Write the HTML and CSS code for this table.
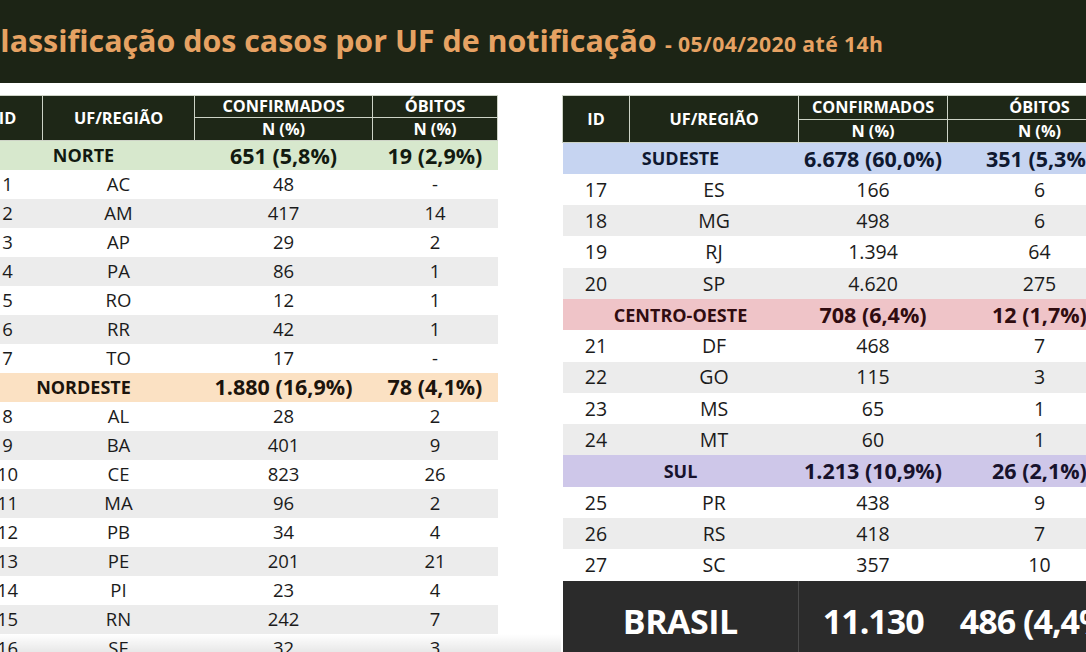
FILE: index.html
```html
<!DOCTYPE html>
<html lang="pt-BR">
<head>
<meta charset="utf-8">
<title>Classificação dos casos por UF de notificação</title>
<link rel="stylesheet" href="styles.css">
</head>
<body>
<header class="titlebar">
  <h1 class="title"><span class="title-main">Classificação dos casos por UF de notificação</span> <span class="title-date">- 05/04/2020 até 14h</span></h1>
</header>
<main class="tables">
  <table class="grid grid-left">
    <colgroup><col class="c-id"><col class="c-uf"><col class="c-conf"><col class="c-ob"></colgroup>
    <thead>
      <tr class="h1"><th rowspan="2">ID</th><th rowspan="2">UF/REGIÃO</th><th>CONFIRMADOS</th><th>ÓBITOS</th></tr>
      <tr class="h2"><th>N (%)</th><th>N (%)</th></tr>
    </thead>
    <tbody>
      <tr class="region norte"><td colspan="2" class="rname">NORTE</td><td class="rnum">651 (5,8%)</td><td class="rnum">19 (2,9%)</td></tr>
      <tr><td>1</td><td>AC</td><td>48</td><td>-</td></tr>
      <tr class="alt"><td>2</td><td>AM</td><td>417</td><td>14</td></tr>
      <tr><td>3</td><td>AP</td><td>29</td><td>2</td></tr>
      <tr class="alt"><td>4</td><td>PA</td><td>86</td><td>1</td></tr>
      <tr><td>5</td><td>RO</td><td>12</td><td>1</td></tr>
      <tr class="alt"><td>6</td><td>RR</td><td>42</td><td>1</td></tr>
      <tr><td>7</td><td>TO</td><td>17</td><td>-</td></tr>
      <tr class="region nordeste"><td colspan="2" class="rname">NORDESTE</td><td class="rnum">1.880 (16,9%)</td><td class="rnum">78 (4,1%)</td></tr>
      <tr><td>8</td><td>AL</td><td>28</td><td>2</td></tr>
      <tr class="alt"><td>9</td><td>BA</td><td>401</td><td>9</td></tr>
      <tr><td>10</td><td>CE</td><td>823</td><td>26</td></tr>
      <tr class="alt"><td>11</td><td>MA</td><td>96</td><td>2</td></tr>
      <tr><td>12</td><td>PB</td><td>34</td><td>4</td></tr>
      <tr class="alt"><td>13</td><td>PE</td><td>201</td><td>21</td></tr>
      <tr><td>14</td><td>PI</td><td>23</td><td>4</td></tr>
      <tr class="alt"><td>15</td><td>RN</td><td>242</td><td>7</td></tr>
      <tr><td>16</td><td>SE</td><td>32</td><td>3</td></tr>
    </tbody>
  </table>
  <table class="grid grid-right">
    <colgroup><col class="c-id"><col class="c-uf"><col class="c-conf"><col class="c-ob"></colgroup>
    <thead>
      <tr class="h1"><th rowspan="2">ID</th><th rowspan="2">UF/REGIÃO</th><th>CONFIRMADOS</th><th>ÓBITOS</th></tr>
      <tr class="h2"><th>N (%)</th><th>N (%)</th></tr>
    </thead>
    <tbody>
      <tr class="region sudeste"><td colspan="2" class="rname">SUDESTE</td><td class="rnum">6.678 (60,0%)</td><td class="rnum">351 (5,3%)</td></tr>
      <tr><td>17</td><td>ES</td><td>166</td><td>6</td></tr>
      <tr class="alt"><td>18</td><td>MG</td><td>498</td><td>6</td></tr>
      <tr><td>19</td><td>RJ</td><td>1.394</td><td>64</td></tr>
      <tr class="alt"><td>20</td><td>SP</td><td>4.620</td><td>275</td></tr>
      <tr class="region centro"><td colspan="2" class="rname">CENTRO-OESTE</td><td class="rnum">708 (6,4%)</td><td class="rnum">12 (1,7%)</td></tr>
      <tr><td>21</td><td>DF</td><td>468</td><td>7</td></tr>
      <tr class="alt"><td>22</td><td>GO</td><td>115</td><td>3</td></tr>
      <tr><td>23</td><td>MS</td><td>65</td><td>1</td></tr>
      <tr class="alt"><td>24</td><td>MT</td><td>60</td><td>1</td></tr>
      <tr class="region sul"><td colspan="2" class="rname">SUL</td><td class="rnum">1.213 (10,9%)</td><td class="rnum">26 (2,1%)</td></tr>
      <tr><td>25</td><td>PR</td><td>438</td><td>9</td></tr>
      <tr class="alt"><td>26</td><td>RS</td><td>418</td><td>7</td></tr>
      <tr><td>27</td><td>SC</td><td>357</td><td>10</td></tr>
      <tr class="total"><td colspan="2" class="tname">BRASIL</td><td class="tnum tconf">11.130</td><td class="tnum">486 (4,4%)</td></tr>
    </tbody>
  </table>
</main>
<div class="shade" aria-hidden="true"></div>
</body>
</html>
```
FILE: styles.css
```css
html, body {
  margin: 0;
  padding: 0;
}
body {
  width: 1086px;
  height: 652px;
  overflow: hidden;
  background: #ffffff;
  font-family: "Open Sans", "Liberation Sans", sans-serif;
  color: #1b1b1b;
  position: relative;
}

/* title bar */
.titlebar {
  height: 83px;
  background: #1c2415;
  box-sizing: border-box;
  padding-top: 24px;
  overflow: hidden;
}
.title {
  margin: 0 0 0 -19px;
  white-space: nowrap;
  font-weight: 700;
  color: #e6a263;
  line-height: 1;
}
.title-main {
  font-size: 30.4px;
}
.title-date {
  font-size: 21.2px;
  letter-spacing: 0.4px;
}

/* tables area */
.tables {
  display: flex;
  align-items: flex-start;
  gap: 64px;
  padding-top: 12px;
}
.grid {
  border-collapse: collapse;
  border-spacing: 0;
  table-layout: fixed;
  flex: none;
}
.grid th,
.grid td {
  padding: 0;
  text-align: center;
  vertical-align: middle;
  line-height: 1;
  white-space: nowrap;
  overflow: visible;
}
.grid th {
  background: #1e2717;
  color: #ffffff;
  font-weight: 700;
  font-size: 16.3px;
  border: 1.5px solid #cdd3c6;
}
.grid td {
  font-size: 18.5px;
  font-weight: 400;
}

/* left table */
.grid-left {
  width: 525px;
  margin-left: -28px;
}
.grid-left .c-id { width: 70px; }
.grid-left .c-uf { width: 152px; }
.grid-left .c-conf { width: 178px; }
.grid-left .c-ob { width: 125px; }
.grid-left .h1 th { height: 21px; }
.grid-left .h2 th { height: 22px; }
.grid-left tbody tr { height: 29px; }

/* right table */
.grid-right {
  width: 569px;
}
.grid-right .c-id { width: 67px; }
.grid-right .c-uf { width: 169px; }
.grid-right .c-conf { width: 149px; }
.grid-right .c-ob { width: 184px; }
.grid-right .h1 th { height: 23px; }
.grid-right .h2 th { height: 22px; }
.grid-right tbody tr { height: 31.3px; }
.grid-right td { font-size: 19.5px; }

/* zebra */
.grid tr.alt td { background: #ececec; }

/* region rows */
.grid .region td { font-weight: 700; }
.grid .region .rname { font-size: 18px; }
.grid .region .rnum { font-size: 21.5px; }
.norte td { background: #d7e8cd; color: #121a10; }
.nordeste td { background: #fbe1c3; color: #1c140c; }
.sudeste td { background: #c6d4f1; color: #0f1830; }
.centro td { background: #efc4c8; color: #300c10; }
.sul td { background: #cec7e9; color: #17122c; }

/* total row */
.grid-right .total td {
  height: 81px;
  background: #2b2b2b;
  color: #ffffff;
  font-weight: 700;
}
.grid-right .total .tname {
  font-size: 34px;
  letter-spacing: -0.5px;
  border-right: 1.5px solid #4a4a4a;
}
.grid-right .total .tnum {
  font-size: 34px;
  letter-spacing: -1px;
}

/* bottom photo shading */
.shade {
  position: absolute;
  left: 0;
  bottom: 0;
  width: 561px;
  height: 18px;
  background: linear-gradient(to top, rgba(0, 0, 0, 0.09), rgba(0, 0, 0, 0));
  pointer-events: none;
}
```
